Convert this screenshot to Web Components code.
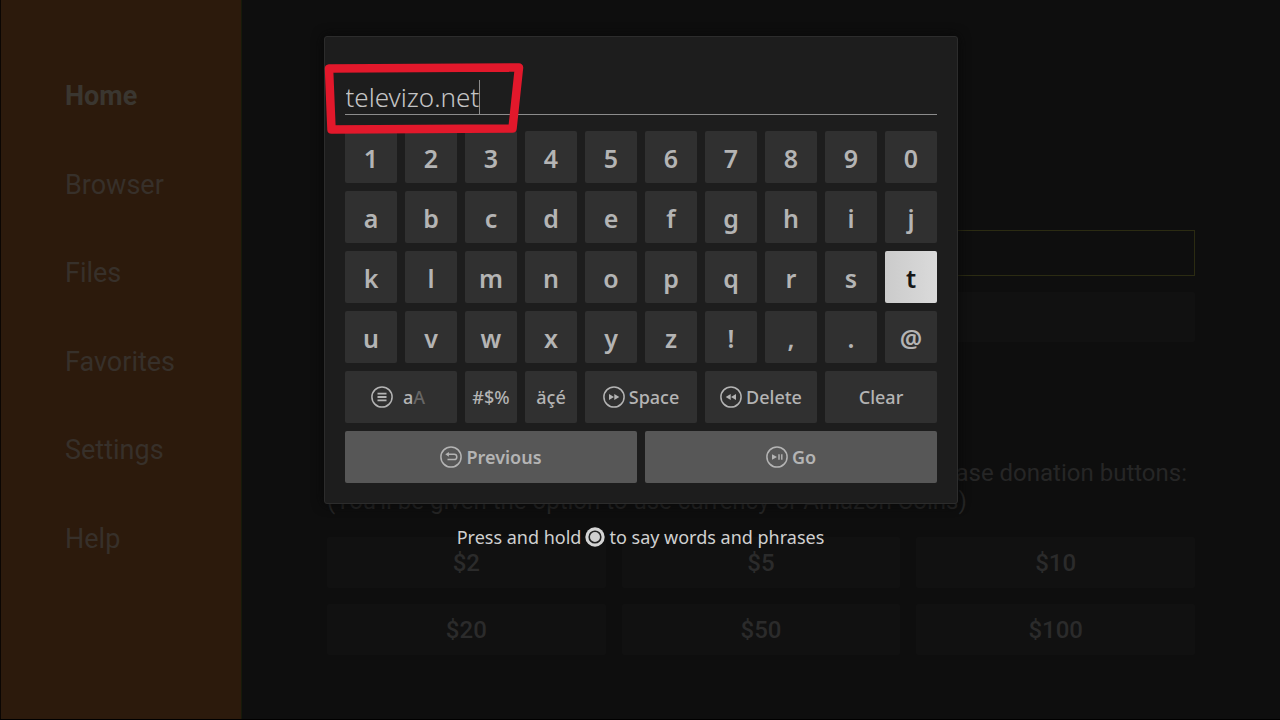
<!DOCTYPE html>
<html lang="en">
<head>
<meta charset="utf-8">
<meta name="viewport" content="width=device-width, initial-scale=1">
<title>Downloader</title>
<style>
  html, body { margin: 0; background: #0e0e0e; }
</style>
</head>
<body>
<tv-app>
  <side-nav slot="nav">
    <nav-item current>Home</nav-item>
    <nav-item>Browser</nav-item>
    <nav-item>Files</nav-item>
    <nav-item>Favorites</nav-item>
    <nav-item>Settings</nav-item>
    <nav-item>Help</nav-item>
  </side-nav>
  <home-page></home-page>
  <keyboard-overlay slot="overlay"></keyboard-overlay>
</tv-app>

<script>
function define(name, html, setup) {
  const template = document.createElement('template');
  template.innerHTML = html;
  customElements.define(name, class extends HTMLElement {
    constructor() {
      super();
      this.attachShadow({ mode: 'open' }).append(template.content.cloneNode(true));
    }
    connectedCallback() {
      if (setup) setup(this, this.shadowRoot);
    }
  });
}

/* Page frame: sidebar, content and the layer above them */
define('tv-app', `
  <style>
    :host {
      display: grid;
      grid-template-columns: 242px minmax(0, 1fr);
      min-height: 100vh;
      box-sizing: border-box;
      border-bottom: 1px solid #000;
      background: #0e0e0e;
      font-family: Roboto, "Noto Sans", sans-serif;
      color: #262626;
      position: relative;
    }
    main { display: grid; }
  </style>
  <slot name="nav"></slot>
  <main><slot></slot></main>
  <slot name="overlay"></slot>
`);

define('side-nav', `
  <style>
    :host {
      display: grid;
      box-sizing: border-box;
      background: #2c1a0c;
      border-left: 1px solid #0b0603;
      border-right: 1px solid #161a0a;
    }
    nav {
      display: flex;
      flex-direction: column;
      justify-content: space-between;
      padding: 80px 16px 164px 64px;
    }
  </style>
  <nav aria-label="Main"><slot></slot></nav>
`);

define('nav-item', `
  <style>
    :host { display: block; font-size: 27px; line-height: 32px; }
    a { color: #37302a; text-decoration: none; }
    :host([current]) a { font-weight: 700; color: #3a3630; }
  </style>
  <a href="#"><slot></slot></a>
`, (host, root) => {
  if (host.hasAttribute('current')) root.querySelector('a').setAttribute('aria-current', 'page');
});

/* Home page behind the keyboard */
define('home-page', `
  <style>
    :host {
      display: flex;
      flex-direction: column;
      padding: 230px 85px 64px 85px;
    }
    input {
      box-sizing: border-box;
      height: 46px;
      width: 100%;
      background: transparent;
      border: 1px solid #2b2b12;
      color: inherit;
    }
    .go {
      height: 50px;
      margin-top: 16px;
      border: 0;
      border-radius: 2px;
      background: #111;
    }
    p { margin: 0; font-size: 24px; line-height: 28px; }
    .lead { margin-top: 117px; padding-right: 8px; text-align: right; }
    .grid {
      display: grid;
      grid-template-columns: repeat(3, minmax(0, 1fr));
      gap: 16px;
      margin-top: 22px;
    }
  </style>
  <input type="text" aria-label="URL or search term">
  <button class="go" type="button" aria-label="Open"></button>
  <p class="lead">purchase donation buttons:</p>
  <p>(You'll be given the option to use currency or Amazon Coins)</p>
  <div class="grid">
    <donate-button>$2</donate-button>
    <donate-button>$5</donate-button>
    <donate-button>$10</donate-button>
    <donate-button>$20</donate-button>
    <donate-button>$50</donate-button>
    <donate-button>$100</donate-button>
  </div>
`);

define('donate-button', `
  <style>
    :host { display: grid; }
    button {
      height: 51px;
      padding: 0;
      border: 0;
      border-radius: 2px;
      background: #111;
      color: #2b2b2b;
      font: 500 24px/28px Roboto, sans-serif;
    }
  </style>
  <button type="button"><slot></slot></button>
`);

/* Round remote-control glyphs */
const glyphs = {
  menu: '<path d="M6.5 7.7h9M6.5 11h9M6.5 14.3h9" stroke-width="1.8"/>',
  forward: '<path d="M6 8l5 3-5 3zM11.3 8l5 3-5 3z" fill="currentColor" stroke="none"/>',
  rewind: '<path d="M16 8l-5 3 5 3zM10.7 8l-5 3 5 3z" fill="currentColor" stroke="none"/>',
  back: '<path d="M8 8.3h6.2a2.6 2.6 0 0 1 0 5.2H7.5" stroke-width="1.5"/><path d="M5.3 8.3l3.6-2.4v4.8z" fill="currentColor" stroke="none"/>',
  play: '<path d="M6 8.2l5 2.8-5 2.8z" fill="currentColor" stroke="none"/><path d="M13 8.3v5.4M15.8 8.3v5.4" stroke-width="1.4"/>'
};
define('remote-glyph', `
  <style>
    :host { display: block; width: 22px; height: 22px; flex: none; }
    svg { display: block; fill: none; stroke: currentColor; }
  </style>
  <svg width="22" height="22" viewBox="0 0 22 22" aria-hidden="true"></svg>
`, (host, root) => {
  root.querySelector('svg').innerHTML =
    '<circle cx="11" cy="11" r="10.1" stroke-width="1.5"/>' + glyphs[host.getAttribute('name')];
});

define('key-cap', `
  <style>
    :host { display: grid; min-width: 0; }
    :host([span="2"]) { grid-column: span 2; }
    :host([span="5"]) { grid-column: span 5; }
    button {
      display: flex;
      align-items: center;
      justify-content: center;
      gap: 4px;
      height: 52px;
      min-width: 0;
      padding: 0 0 0 1px;
      border: 0;
      border-radius: 2px;
      background: #303030;
      color: #b4b4b4;
      font: 600 25px/32px "Noto Sans", sans-serif;
      white-space: nowrap;
    }
    :host([kind="word"]) button { font-size: 18px; font-weight: 500; }
    :host([kind="action"]) button {
      background: #575757;
      font-size: 18px;
    }
    :host(:not([kind])) button { padding-top: 2px; }
    :host([focused]) button {
      background: linear-gradient(90deg, #cbcbcb, #dadada);
      color: #161616;
    }
  </style>
  <button type="button"><slot name="icon"></slot><span><slot></slot></span></button>
`);

define('text-entry', `
  <style>
    :host {
      display: flex;
      align-items: flex-end;
      position: relative;
      height: 57px;
      border-bottom: 1px solid #8c8c8c;
    }
    input {
      field-sizing: content;
      box-sizing: border-box;
      height: 34px;
      padding: 0 0 0 1px;
      border: 0;
      outline: 0;
      background: transparent;
      color: #c4c4c4;
      font: 300 26px/34px "Noto Sans", sans-serif;
    }
    .caret { width: 1px; height: 34px; background: #8c8c8c; }
    .mark {
      position: absolute;
      left: -21px;
      top: 5px;
      pointer-events: none;
    }
  </style>
  <input type="text" value="televizo.net" aria-label="Address">
  <span class="caret"></span>
  <svg class="mark" width="200" height="72" viewBox="0 0 200 72" aria-hidden="true">
    <path d="M5 6.5L195 5.5L188.500 66.500L7.500 67.500Z" fill="none" stroke="#e2182b" stroke-width="8.500" stroke-linejoin="round"/>
  </svg>
`);

define('keyboard-overlay', `
  <style>
    :host {
      position: absolute;
      inset: 0;
      display: flex;
      flex-direction: column;
      align-items: center;
      padding-top: 36px;
      padding-left: 1px;
      font-family: "Noto Sans", sans-serif;
    }
    section {
      box-sizing: border-box;
      width: min(634px, 100%);
      padding: 20px;
      background: #1d1d1d;
      border: 1px solid #2c2c2c;
      border-radius: 3px;
      box-shadow: 0 0 12px #080808;
    }
    .keys {
      display: grid;
      grid-template-columns: repeat(10, minmax(0, 1fr));
      gap: 8px;
      margin-top: 16px;
    }
    .case { padding: 0 6px; }
    .off { color: #666; }
    .hint {
      display: flex;
      align-items: center;
      gap: 4px;
      margin: 20px 0 0;
      color: #d0d0d0;
      font-size: 18px;
      line-height: 26px;
    }
  </style>
  <section role="dialog" aria-label="Keyboard">
    <text-entry></text-entry>
    <div class="keys">
      <key-cap span="2" kind="word"><remote-glyph slot="icon" name="menu"></remote-glyph><span class="case">a<span class="off">A</span></span></key-cap>
      <key-cap kind="word">#$%</key-cap>
      <key-cap kind="word">äçé</key-cap>
      <key-cap span="2" kind="word"><remote-glyph slot="icon" name="forward"></remote-glyph>Space</key-cap>
      <key-cap span="2" kind="word"><remote-glyph slot="icon" name="rewind"></remote-glyph>Delete</key-cap>
      <key-cap span="2" kind="word">Clear</key-cap>
      <key-cap span="5" kind="action"><remote-glyph slot="icon" name="back"></remote-glyph>Previous</key-cap>
      <key-cap span="5" kind="action"><remote-glyph slot="icon" name="play"></remote-glyph>Go</key-cap>
    </div>
  </section>
  <p class="hint">
    <span>Press and hold</span>
    <svg width="20" height="20" viewBox="0 0 20 20" aria-hidden="true">
      <circle cx="10" cy="10" r="9.7" fill="#d4d4d4"/>
      <circle cx="10" cy="10" r="5.8" fill="#cfcfcf" stroke="#222" stroke-width="1.6"/>
    </svg>
    <span>to say words and phrases</span>
  </p>
`, (host, root) => {
  const keys = root.querySelector('.keys');
  const caps = [...'1234567890abcdefghijklmnopqrstuvwxyz!,.@'].map(ch => {
    const cap = document.createElement('key-cap');
    cap.textContent = ch;
    if (ch === 't') cap.setAttribute('focused', '');
    return cap;
  });
  keys.prepend(...caps);
});
</script>
</body>
</html>
